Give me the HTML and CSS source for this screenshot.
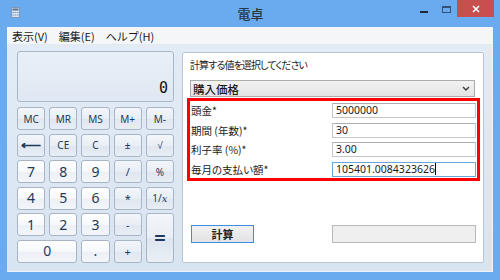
FILE: index.html
```html
<!DOCTYPE html>
<html lang="ja">
<head>
    <meta charset="UTF-8">
    <title>電卓</title>
    <link rel="stylesheet" href="styles.css">
</head>
<body>
    <div class="window">
        <div class="titlebar">
            <div class="app-icon">
                <svg width="9" height="11" viewBox="0 0 9 11">
                    <rect x="0.5" y="0.5" width="8" height="10" fill="#d5e3f2" stroke="#7d98b8"/>
                    <rect x="1.5" y="1.5" width="6" height="2" fill="#5a7491"/>
                    <rect x="1.5" y="5" width="1.5" height="1" fill="#7d98b8"/>
                    <rect x="3.75" y="5" width="1.5" height="1" fill="#7d98b8"/>
                    <rect x="6" y="5" width="1.5" height="1" fill="#7d98b8"/>
                    <rect x="1.5" y="7.5" width="1.5" height="1" fill="#7d98b8"/>
                    <rect x="3.75" y="7.5" width="1.5" height="1" fill="#7d98b8"/>
                    <rect x="6" y="7.5" width="1.5" height="1" fill="#7d98b8"/>
                </svg>
            </div>
            <div class="title">電卓</div>
            <div class="controls">
                <span class="btn-min"></span>
                <span class="btn-max"></span>
                <span class="btn-close">
                    <svg width="8" height="8" viewBox="0 0 8 8">
                        <path d="M1 1 L7 7 M7 1 L1 7" stroke="#fff" stroke-width="1.6"/>
                    </svg>
                </span>
            </div>
        </div>

        <div class="client">
            <div class="menubar">
                <span>表示(V)</span>
                <span>編集(E)</span>
                <span>ヘルプ(H)</span>
            </div>

            <div class="main">
                <div class="calc">
                    <div class="display">0</div>
                    <div class="keys">
                        <button class="key small">MC</button>
                        <button class="key small">MR</button>
                        <button class="key small">MS</button>
                        <button class="key small">M+</button>
                        <button class="key small">M-</button>

                        <button class="key back">⟵</button>
                        <button class="key small">CE</button>
                        <button class="key small">C</button>
                        <button class="key small">±</button>
                        <button class="key small">√</button>

                        <button class="key num">7</button>
                        <button class="key num">8</button>
                        <button class="key num">9</button>
                        <button class="key op">/</button>
                        <button class="key small">%</button>

                        <button class="key num">4</button>
                        <button class="key num">5</button>
                        <button class="key num">6</button>
                        <button class="key op">*</button>
                        <button class="key small inv">1/<i>x</i></button>

                        <button class="key num">1</button>
                        <button class="key num">2</button>
                        <button class="key num">3</button>
                        <button class="key op">-</button>
                        <button class="key op equals">=</button>

                        <button class="key num zero">0</button>
                        <button class="key num">.</button>
                        <button class="key op">+</button>
                    </div>
                </div>

                <div class="panel">
                    <p class="hint">計算する値を選択してください</p>
                    <div class="select">
                        <span>購入価格</span>
                        <svg width="8" height="5" viewBox="0 0 8 5">
                            <path d="M1 1 L4 4 L7 1" fill="none" stroke="#444" stroke-width="1.5"/>
                        </svg>
                    </div>

                    <div class="fields">
                        <div class="field">
                            <label>頭金*</label>
                            <div class="input">5000000</div>
                        </div>
                        <div class="field">
                            <label>期間 (年数)*</label>
                            <div class="input">30</div>
                        </div>
                        <div class="field">
                            <label>利子率 (%)*</label>
                            <div class="input">3.00</div>
                        </div>
                        <div class="field">
                            <label>毎月の支払い額*</label>
                            <div class="input focused">105401.0084323626<span class="caret"></span></div>
                        </div>
                    </div>

                    <div class="actions">
                        <button class="calc-button">計算</button>
                        <div class="result"></div>
                    </div>
                </div>
            </div>
        </div>
    </div>
</body>
</html>
```

FILE: styles.css
```css
* {
    box-sizing: border-box;
    margin: 0;
    padding: 0;
}

body {
    font-family: "Noto Sans", "Noto Sans CJK JP", sans-serif;
    background: #6aabf0;
    color: #1a1a1a;
}

.window {
    width: 500px;
    height: 280px;
    background: #6aabf0;
    display: flex;
    flex-direction: column;
}

/* title bar */
.titlebar {
    height: 27px;
    display: grid;
    grid-template-columns: 1fr auto 1fr;
}

.app-icon {
    padding: 7px 0 0 11px;
    line-height: 0;
}

.title {
    font-family: "Noto Sans CJK JP", sans-serif;
    font-size: 13px;
    font-weight: 500;
    line-height: 27px;
    color: #2b3645;
    padding-left: 1px;
}

.controls {
    display: flex;
    justify-content: flex-end;
    align-items: flex-start;
    padding-right: 6px;
}

.btn-min {
    width: 8px;
    height: 2px;
    margin: 11px 14px 0 0;
    background: #1d2a3a;
}

.btn-max {
    width: 9px;
    height: 7px;
    margin: 6px 6px 0 0;
    border: 1px solid #36506f;
    border-top-width: 2px;
}

.btn-close {
    width: 37px;
    height: 17px;
    background: #c7504f;
    display: flex;
    align-items: center;
    justify-content: center;
}

/* client */
.client {
    flex: 1;
    margin: 0 7px 8px 7px;
    background: linear-gradient(#e3ecf6, #d9e4f1);
    border-right: 1px solid #eef3f9;
    border-bottom: 1px solid #eef3f9;
    display: flex;
    flex-direction: column;
}

.menubar {
    height: 18px;
    background: #f5f6f8;
    border-bottom: 1px solid #e3e9f0;
    display: flex;
    align-items: center;
    padding-left: 5px;
    font-family: "Noto Sans CJK JP", sans-serif;
    font-size: 11px;
    color: #1a1a1a;
}

.menubar span {
    margin-right: 11px;
}

.main {
    flex: 1;
    display: flex;
    gap: 8px;
    padding: 6px 8px 0 10px;
}

/* calculator */
.calc {
    width: 157px;
}

.display {
    height: 51px;
    margin-bottom: 5px;
    border: 1px solid #a9b8c9;
    border-radius: 3px;
    background: linear-gradient(#e8eff7, #dfe8f2);
    font-family: "DejaVu Sans Mono", monospace;
    font-size: 15px;
    color: #111;
    text-align: right;
    padding: 27px 5px 0 0;
}

.keys {
    display: grid;
    grid-template-columns: repeat(5, 1fr);
    grid-auto-rows: 23px;
    gap: 3.6px 4px;
}

.key {
    border: 1px solid #a7b5c6;
    border-radius: 3px;
    background: linear-gradient(#f3f6fa 0%, #e8eef5 50%, #dfe6ef 51%, #e8eef5 100%);
    color: #1e395b;
    font-family: "Noto Sans", sans-serif;
    font-size: 13px;
    line-height: 1;
}

.key.small {
    font-size: 10px;
}

.key.inv i {
    font-family: "DejaVu Serif", serif;
    font-size: 10px;
}

.key.back {
    font-size: 14px;
    font-weight: bold;
}

.key.num {
    background: linear-gradient(#ffffff 0%, #f6f8fb 50%, #ecf0f5 51%, #f3f6f9 100%);
    font-size: 14px;
}

.key.op {
    font-size: 11px;
}

.key.equals {
    grid-row: span 2;
    font-size: 20px;
    font-weight: bold;
}

.key.zero {
    grid-column: span 2;
}

/* right panel */
.panel {
    width: 302px;
    height: 211px;
    margin-top: 1px;
    background: #fff;
    border: 1px solid #b9c5d3;
    border-radius: 2px;
    padding: 5px 8px 0 7px;
    font-family: "Noto Sans CJK JP", sans-serif;
    font-feature-settings: "palt";
    font-size: 10.5px;
}

.hint {
    font-size: 10px;
    letter-spacing: -0.9px;
    line-height: 14px;
    height: 22px;
    color: #222;
}

.select {
    height: 17px;
    border: 1px solid #acacac;
    background: linear-gradient(#f2f2f2, #e4e4e4);
    display: flex;
    align-items: center;
    justify-content: space-between;
    padding: 0 4px 0 2px;
    font-size: 11.5px;
    font-weight: 500;
}

.fields {
    height: 83px;
    margin: 1px -5px 0 -3px;
    border: 3px solid #ff0000;
    padding: 2px 1px 0 1px;
    display: flex;
    flex-direction: column;
    gap: 4.6px;
    overflow: hidden;
}

.field {
    height: 15px;
    display: flex;
    align-items: center;
    justify-content: space-between;
}

.field label {
    line-height: 15px;
}

.input {
    width: 144px;
    height: 15px;
    border: 1px solid #c5c5c5;
    border-top-color: #abadb3;
    font-family: "Noto Sans", sans-serif;
    font-size: 10.5px;
    line-height: 13px;
    padding-left: 3px;
    display: flex;
    align-items: center;
}

.input.focused {
    border-color: #6aa4dd;
}

.caret {
    width: 1px;
    height: 12px;
    background: #000;
}

.actions {
    margin-top: 44px;
    display: flex;
    justify-content: space-between;
    padding: 0 0 0 1px;
}

.calc-button {
    width: 63px;
    height: 18px;
    border: 1px solid #3d8ee0;
    background: linear-gradient(#f1f1f1, #e3e3e3);
    font-family: "Noto Sans CJK JP", sans-serif;
    font-size: 11px;
    font-weight: bold;
    color: #222;
}

.result {
    width: 144px;
    height: 18px;
    margin-right: -1px;
    border: 1px solid #b8b8b8;
    background: #efefef;
}
```
